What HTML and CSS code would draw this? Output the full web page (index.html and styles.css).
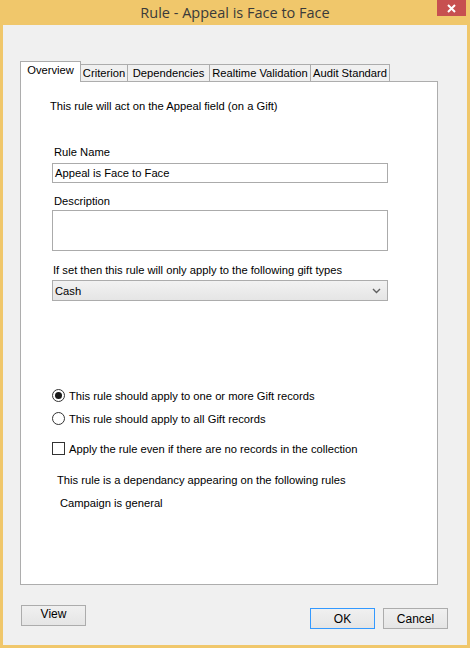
FILE: index.html
```html
<!DOCTYPE html>
<html>
<head>
<meta charset="utf-8">
<link rel="stylesheet" href="styles.css">
</head>
<body>
<div class="window">
  <div class="titlebar">
    <span class="title">Rule - Appeal is Face to Face</span>
    <div class="close"><svg width="9" height="9" viewBox="0 0 9 9"><path d="M1 1 L8 8 M8 1 L1 8" stroke="#fff" stroke-width="2" fill="none"/></svg></div>
  </div>
  <div class="client">
    <div class="tabs">
      <div class="tab active w-overview">Overview</div>
      <div class="tab w-criterion">Criterion</div>
      <div class="tab w-dep">Dependencies</div>
      <div class="tab w-rt">Realtime Validation</div>
      <div class="tab w-audit">Audit Standard</div>
    </div>
    <div class="panel">
      <div class="intro">This rule will act on the Appeal field (on a Gift)</div>
      <div class="label l-name">Rule Name</div>
      <div class="input">Appeal is Face to Face</div>
      <div class="label l-desc">Description</div>
      <div class="textarea"></div>
      <div class="label l-types">If set then this rule will only apply to the following gift types</div>
      <div class="select"><span>Cash</span>
        <svg width="9" height="6" viewBox="0 0 9 6"><path d="M1 1 L4.5 4.5 L8 1" stroke="#606060" stroke-width="1.4" fill="none"/></svg>
      </div>
      <div class="option r1"><span class="radio checked"></span>This rule should apply to one or more Gift records</div>
      <div class="option r2"><span class="radio"></span>This rule should apply to all Gift records</div>
      <div class="option c1"><span class="check"></span>Apply the rule even if there are no records in the collection</div>
      <div class="dep">This rule is a dependancy appearing on the following rules</div>
      <div class="dep2">Campaign is general</div>
    </div>
    <div class="footer">
      <div class="btn view">View</div>
      <div class="spacer"></div>
      <div class="btn ok">OK</div>
      <div class="btn cancel">Cancel</div>
    </div>
  </div>
</div>
</body>
</html>
```
FILE: styles.css
```css
html, body { margin: 0; padding: 0; }
body { width: 470px; height: 648px; overflow: hidden; font-family: "Liberation Sans", Arial, sans-serif; font-size: 11.2px; color: #000; }
.window { width: 470px; height: 648px; background: #f0c76b; display: flex; flex-direction: column; box-sizing: border-box; }
.titlebar { height: 25px; position: relative; display: flex; justify-content: center; align-items: center; flex: none; }
.title { font-family: "Open Sans", "Noto Sans", sans-serif; font-size: 14.5px; color: #3a3a3a; margin-top: -1px; }
.close { position: absolute; left: 437px; top: 0; width: 29px; height: 16px; background: #c75050; display: flex; align-items: center; justify-content: center; }
.client { flex: 1; margin: 0 3px 3px 3px; background: #f0f0f0; padding: 36px 0 0 17px; box-sizing: border-box; display: flex; flex-direction: column; }
.tabs { display: flex; align-items: flex-end; height: 20px; position: relative; z-index: 2; }
.tab { height: 17px; box-sizing: border-box; border: 1px solid #acacac; border-bottom: none; background: #f0f0f0; display: flex; align-items: center; justify-content: center; line-height: 13px; margin-left: -1px; padding-top: 1px; }
.tab.active { height: 21px; background: #fff; margin-left: 0; margin-bottom: -1px; padding-top: 0; padding-bottom: 4px; z-index: 3; position: relative; }
.w-overview { width: 61px; }
.w-criterion { width: 48px; }
.w-dep { width: 83px; }
.w-rt { width: 102px; }
.w-audit { width: 80px; }
.panel { width: 418px; height: 504px; box-sizing: border-box; border: 1px solid #adadad; background: #fff; display: flex; flex-direction: column; align-items: flex-start; }
.intro { line-height: 13px; margin: 18px 0 0 29px; }
.label { line-height: 13px; margin-left: 33px; }
.l-name { margin-top: 33px; }
.l-desc { margin-top: 12px; }
.l-types { margin-top: 13px; margin-left: 32px; }
.input { margin: 4px 0 0 31px; width: 336px; height: 20px; box-sizing: border-box; border: 1px solid #ababab; line-height: 18px; padding-left: 2px; }
.textarea { margin: 2px 0 0 31px; width: 336px; height: 41px; box-sizing: border-box; border: 1px solid #ababab; }
.select { margin: 3px 0 0 31px; width: 336px; height: 21px; box-sizing: border-box; border: 1px solid #acacac; background: linear-gradient(#f2f2f2, #e5e5e5); display: flex; align-items: center; justify-content: space-between; padding: 0 6px 0 2px; }
.option { height: 17px; display: flex; align-items: center; margin-left: 31px; }
.r1 { margin-top: 86px; }
.r2 { margin-top: 6px; }
.c1 { margin-top: 13px; }
.radio { width: 13px; height: 13px; box-sizing: border-box; border: 1px solid #333; border-radius: 50%; background: #fff; margin-right: 4px; display: flex; align-items: center; justify-content: center; }
.radio.checked::after { content: ""; width: 7px; height: 7px; border-radius: 50%; background: #1a1a1a; }
.check { width: 13px; height: 13px; box-sizing: border-box; border: 1px solid #333; background: #fff; margin-right: 4px; }
.dep { line-height: 13px; margin: 17px 0 0 36px; }
.dep2 { line-height: 13px; margin: 10px 0 0 39px; }
.footer { display: flex; align-items: flex-start; width: 428px; }
.spacer { flex: 1; }
.btn { width: 65px; height: 21px; box-sizing: border-box; border: 1px solid #acacac; background: linear-gradient(#f0f0f0, #e5e5e5); display: flex; align-items: center; justify-content: center; font-size: 12px; }
.view { margin: 20px 0 0 1px; padding-bottom: 3px; }
.ok { margin-top: 23px; border-color: #3399ff; }
.cancel { margin: 23px 0 0 8px; }
```
